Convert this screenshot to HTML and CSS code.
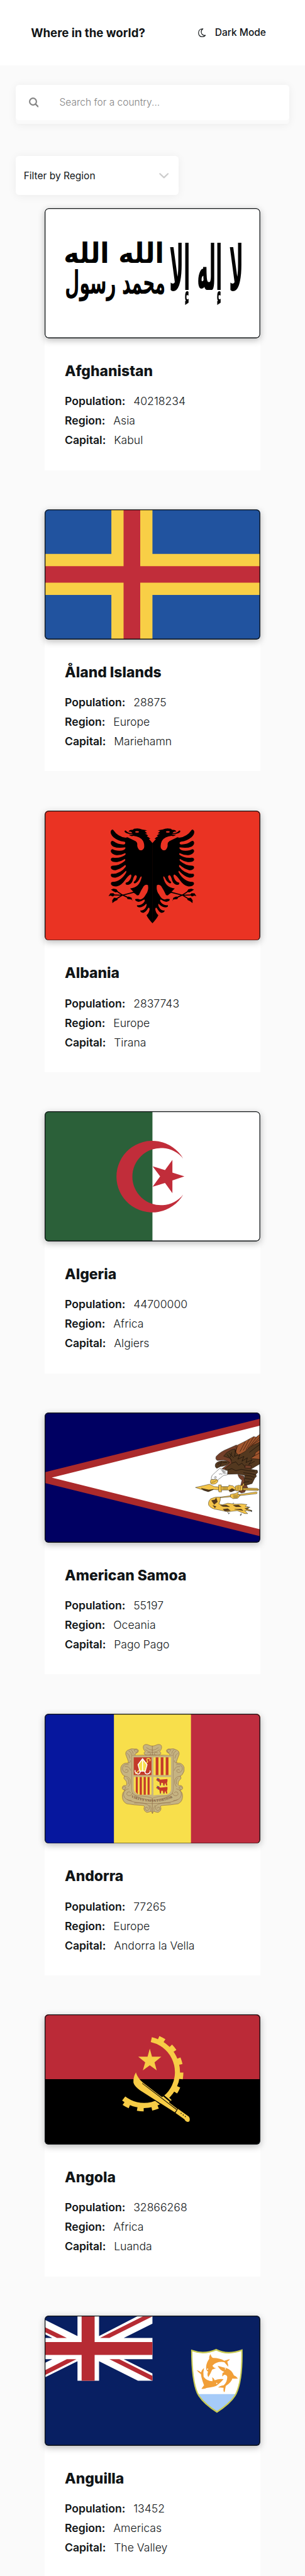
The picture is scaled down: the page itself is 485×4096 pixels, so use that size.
FILE: index.html
```html
<!DOCTYPE html>
<html lang="en">
<head>
<meta charset="utf-8">
<title>Where in the world?</title>
<link rel="stylesheet" href="styles.css">
</head>
<body>
<header class="header">
  <h1 class="brand">Where in the world?</h1>
  <button class="mode" type="button">
    <svg class="moon" viewBox="0 0 19 22"><path d="M12 1.2C3.500 1.600 1 6.500 1 11.200c0 5.600 3.800 9.800 9 9.800 3.400 0 6.200-1.300 8-3.700-6.500 1-10.300-2.800-10.300-8.300 0-3.200 1.500-6 4.300-7.800z" fill="none" stroke="#111517" stroke-width="1.800" stroke-linejoin="round"/></svg>
    <span>Dark Mode</span>
  </button>
</header>
<main class="main">
  <div class="search">
    <div class="search-field">
      <svg class="lens" viewBox="0 0 24 24" fill="none" stroke="#848484" stroke-linecap="round"><circle cx="10" cy="10" r="8.300" stroke-width="3.200"/><path d="M16.500 16.500l5.800 5.800" stroke-width="3.600"/></svg>
      <span class="placeholder">Search for a country...</span>
    </div>
  </div>
  <div class="filter">
    <span>Filter by Region</span>
    <svg class="chevron" viewBox="0 0 24 14"><path d="M2 2l10 9.500L22 2" fill="none" stroke="#ccc" stroke-width="3.400" stroke-linecap="round" stroke-linejoin="round"/></svg>
  </div>
  <div class="cards">

    <article class="card">
      <svg class="flag" viewBox="0 0 530 320" preserveAspectRatio="none">
        <rect width="530" height="320" fill="#fff"/>
        <g class="script" transform="translate(30 68) scale(.3333)">
          <text transform="translate(830 400) scale(1 2.300)" font-size="200" textLength="545" lengthAdjust="spacingAndGlyphs">لا إله إلا</text>
          <text transform="translate(50 200)" font-size="205" textLength="740" lengthAdjust="spacingAndGlyphs">الله الله</text>
          <text transform="translate(60 425) scale(1 1.150)" font-size="205" textLength="740" lengthAdjust="spacingAndGlyphs">محمد رسول</text>
        </g>
        <rect class="edge" x="1" y="1" width="528" height="318" rx="9"/>
      </svg>
      <div class="info">
        <h2 class="name">Afghanistan</h2>
        <p class="row"><b>Population:</b><span>40218234</span></p>
        <p class="row"><b>Region:</b><span>Asia</span></p>
        <p class="row"><b>Capital:</b><span>Kabul</span></p>
      </div>
    </article>

    <article class="card">
      <svg class="flag" viewBox="0 0 530 320" preserveAspectRatio="none">
        <rect width="530" height="320" fill="#21539f"/>
        <path d="M164 0h101v320H164zM0 109.400h530v101H0z" fill="#f8cf46"/>
        <path d="M194 0h41v320h-41zM0 139.500h530v40.500H0z" fill="#c12d3a"/>
        <rect class="edge" x="1" y="1" width="528" height="318" rx="9"/>
      </svg>
      <div class="info">
        <h2 class="name">Åland Islands</h2>
        <p class="row"><b>Population:</b><span>28875</span></p>
        <p class="row"><b>Region:</b><span>Europe</span></p>
        <p class="row"><b>Capital:</b><span>Mariehamn</span></p>
      </div>
    </article>

    <article class="card">
      <svg class="flag" viewBox="0 0 530 320" preserveAspectRatio="none">
        <rect width="530" height="320" fill="#ea3323"/>
        <defs>
          <g id="half-eagle">
            <path d="M785 228 760 205 770 204Q758 193 745 190L755 187Q745 178 733 176L748 174 732 162 748 157 715 153Q690 143 660 149L650 155Q628 152 622 165 640 162 648 172 625 177 603 158 592 158 597 167 610 178 655 179 640 184 624 181 635 192 655 188 700 192 720 215 732 235 727 255 715 272 697 266 682 258 681 240 684 225 670 217L615 195 603 198Q550 192 520 156 510 148 502 162 498 180 520 195 550 215 590 220 602 222 600 228 600 235 585 235 550 235 522 218 505 210 502 225 502 240 520 247 550 258 600 251 604 256 598 260 590 268 560 270 530 268 515 261 500 262 503 275 510 290 540 294 570 296 600 283 606 288 600 292 570 312 518 308 500 308 503 322 510 334 545 332 575 328 598 315 603 319 598 325 560 352 517 352 500 352 503 365 510 378 535 377 570 370 600 348 607 352 603 358 570 395 515 397 500 395 503 408 508 420 535 418 565 415 605 380 610 384 606 390 570 440 515 441 500 442 504 455 515 468 545 466 575 460 600 430 620 408 635 401 645 402 640 415 630 440 604 446 598 455 612 458 640 458 650 435 658 408 668 404 680 405 678 415 675 430 658 442 655 450 668 449 690 440 700 418 710 405 711 415 705 440 685 460 665 475 633 478L650 492 660 503Q672 508 680 516L692 514Q705 490 725 465 740 452 754 460 760 490 740 510 720 540 700 538 680 532 667 537 665 548 690 551 710 548 728 538 735 540 730 550 715 572 680 570 675 580 695 582 720 582 742 562 748 565 740 580 725 602 702 598 700 610 722 612 740 608 755 585 762 580 765 590 762 612 744 625 755 645 785 670z"/>
            <ellipse cx="680" cy="166" rx="13" ry="4.500" fill="#ea3323"/>
            <path d="M660 498 580 515 500 513M537 490 580 513 630 532M580 515 530 540" fill="none" stroke="#000" stroke-width="6"/>
            <path d="M503 484l18-5 20 3 10 12-15 5-16-6zM487 520l12-15 22-1 8 9-12 9-17-5zM513 558l-1-15 12-14 20 2 5 9-20 8zM649 548l-6-10-28-2-4-9 12-5 20 7z"/>
          </g>
        </defs>
        <g transform="scale(.3635 .4464) translate(-55 -49)">
          <use href="#half-eagle"/>
          <use href="#half-eagle" transform="translate(1568 0) scale(-1 1)"/>
        </g>
        <rect class="edge" x="1" y="1" width="528" height="318" rx="9"/>
      </svg>
      <div class="info">
        <h2 class="name">Albania</h2>
        <p class="row"><b>Population:</b><span>2837743</span></p>
        <p class="row"><b>Region:</b><span>Europe</span></p>
        <p class="row"><b>Capital:</b><span>Tirana</span></p>
      </div>
    </article>

    <article class="card">
      <svg class="flag" viewBox="0 0 530 320" preserveAspectRatio="none">
        <rect width="530" height="320" fill="#fff"/>
        <path d="M0 0h265v320H0z" fill="#2b6039"/>
        <path d="M340.600 116.500A88 88 0 1 0 340.600 204.900 70.300 70.300 0 1 1 340.600 116.500z" fill="#c12d3a"/>
        <path transform="scale(.3635 .4464) translate(-55 -49)" d="M1000 408 919 430V500L869 444 785 465 836 408 785 352 869 373 919 317V387z" fill="#c12d3a"/>
        <rect class="edge" x="1" y="1" width="528" height="318" rx="9"/>
      </svg>
      <div class="info">
        <h2 class="name">Algeria</h2>
        <p class="row"><b>Population:</b><span>44700000</span></p>
        <p class="row"><b>Region:</b><span>Africa</span></p>
        <p class="row"><b>Capital:</b><span>Algiers</span></p>
      </div>
    </article>

    <article class="card">
      <svg class="flag" viewBox="0 0 530 320" preserveAspectRatio="none">
        <rect width="530" height="320" fill="#000062"/>
        <g transform="scale(.3635 .4464) translate(-55 -49)">
          <path d="M55 378 1513 83V731L55 437z" fill="#ab2a2b"/>
          <path d="M103 408 1513 121V693z" fill="#fff"/>
        </g>
        <g transform="translate(360 28) scale(.3333)" stroke="#000" stroke-width="2" stroke-linejoin="round">
          <path d="M515 70 480 98 462 93 400 127 335 160 310 200 340 240 420 240 515 190z" fill="#a0552d"/>
          <path d="M335 155 270 184Q215 205 185 240 176 262 195 270L240 266Q285 275 275 295L228 330 250 345 290 330 330 220z" fill="#74402a"/>
          <path d="M515 130 440 165 395 205 350 230 325 205 322 185 300 190 262 212 240 238 290 255 300 290 250 330 262 345 248 372 345 370 395 380 385 440 400 455 450 440 470 400 482 388 478 372 492 358 488 342 440 335 515 290z" fill="#53381f"/>
          <path d="M515 184 475 212 470 230 440 255 515 262z" fill="#a0552d"/>
          <path d="M240 272Q195 272 180 295 172 318 190 328L215 315Q260 312 285 285 270 270 240 272z" fill="#53381f"/>
          <path d="M345 372Q350 400 375 415L362 470 352 500 372 510 395 504 402 490 418 470 408 452 385 445 395 425 388 385z" fill="#74402a"/>
          <path d="M400 305 445 310 440 328 395 325z" fill="#74402a"/>
          <path d="M345 160 325 205M400 130 360 205M430 112 385 195M462 95 405 190M490 90 420 180M515 90 440 165M515 110 450 155M330 190 320 240 360 225 345 260 390 240 375 275 415 250 405 285 450 265 425 300 470 275M300 210 290 245M280 215 315 250M265 225 300 270M300 290 330 280 350 305 375 290 400 318M515 145 430 210M505 215 450 245M270 340 300 330 330 345 370 335 420 345 470 350M385 360 430 365 475 375M400 380 440 385 465 395M395 400 450 410M395 430 430 425M195 300 225 280 215 310M230 285 265 285" fill="none" stroke-width="2.500"/>
          <path d="M212 328 185 352 155 380 148 402 158 410 195 415 240 380 268 375 270 345 240 335z" fill="#fff"/>
          <path d="M212 328 232 345 222 330 248 345 270 345 245 355 268 365 240 368z" fill="#aaa" stroke="none"/>
          <path d="M205 368l8 4 5-6 6 6 8-4M168 395l15-8 2 12-15 3" fill="none"/>
          <path d="M147 410Q138 428 145 440 160 450 180 442 198 432 198 418L185 408 165 412z" fill="#f5c54b"/>
          <path d="M150 432l25-6 15-14" fill="none"/>
          <path d="M32 469 135 445 170 462 205 465 205 487 165 484 130 500 95 490z" fill="#f5c54b"/>
          <path d="M75 475 130 487 165 483 125 500 95 490z" fill="#53381f"/>
          <path d="M203 450h20v12h55v-10l30 5 15 14 165 4 12 8-5 9-165-4-25 9-20 5-8-14h-52v14h-20q-6-12-2-26z" fill="#f5c54b"/>
          <path d="M222 460v30M236 463v23M246 463v23M256 463v23M266 463v23M280 490l22-14 22 12-30 14z" fill="#53381f"/>
          <path d="M380 480 497 485 M380 474 385 488" fill="none"/>
          <path d="M325 460 350 452 378 455 388 432 392 450 380 462 378 492 330 495z" fill="#f5c54b"/>
          <path d="M340 460v30M352 458v30M364 458v30" fill="none"/>
          <path d="M215 540 290 530 482 502q10 5 2 13L355 530 290 538 215 545z" fill="#f5c54b"/>
          <path d="M290 520 330 512 350 500 345 520 362 528 345 548 310 552 290 540z" fill="#f5c54b"/>
          <path d="M310 525h35M310 535h40M312 544h30" fill="none"/>
          <path d="M215 540Q180 535 145 552 122 575 130 600 145 625 190 632L270 648 340 640 395 662 418 662 395 640 450 640 410 625 430 615 400 610 412 595 370 590 330 592 270 585 230 597 205 590Q220 565 215 540z" fill="#f5c54b"/>
          <path d="M150 565 175 560 185 545 195 575 170 595zM160 600 185 610 175 620zM215 600 260 598 285 612 235 610zM235 630 270 625 290 640 250 645zM310 600 350 598 370 612 330 612zM320 630 370 628 385 640zM395 622l30 2-12 10z" fill="#53381f" stroke-width="1"/>
          <path d="M270 650l8 14M285 655l-8 10M370 660l-5 18M360 672l12-2M420 640l30 5M440 636l6 14M310 590l2-8M410 612l25 4" fill="none" stroke-width="3"/>
        </g>
        <rect class="edge" x="1" y="1" width="528" height="318" rx="9"/>
      </svg>
      <div class="info">
        <h2 class="name">American Samoa</h2>
        <p class="row"><b>Population:</b><span>55197</span></p>
        <p class="row"><b>Region:</b><span>Oceania</span></p>
        <p class="row"><b>Capital:</b><span>Pago Pago</span></p>
      </div>
    </article>

    <article class="card">
      <svg class="flag" viewBox="0 0 530 320" preserveAspectRatio="none">
        <rect width="530" height="320" fill="#f8df4b"/>
        <path d="M0 0h170.300v320H0z" fill="#06179e"/>
        <path d="M359.700 0H530v320H359.700z" fill="#bf2d3f"/>
        <defs>
          <path id="motto" d="M218 502Q375 570 532 502"/>
          <g id="half-frame">
            <path d="M376 192H355Q320 200 312 175L322 165Q300 140 310 120 325 105 350 118 362 124 376 124V192zM310 192 250 195Q240 185 255 178 275 170 272 155 262 142 245 146 215 140 200 152 175 160 178 185 185 205 195 230 200 245 195 250 155 245 142 280 135 310 155 335 165 345 172 345 155 360 175 375 188 385 185 410 180 420 170 415 152 415 152 438 160 452 175 450 150 465 153 500 155 535 185 550 240 560 300 562 325 565 312 580 310 605 335 614 358 610 366 605L376 622V192z" fill="#c5b382" stroke="#8a6746" stroke-width="3" stroke-linejoin="round"/>
            <path d="M250 165q-12-4-8-14 14-8 22 6 2 16-14 18M200 160q20 10 20 30M215 150q15 12 18 30M186 175q20 12 24 40M190 250q30-5 22-20M200 262q-35-10-45 20-5 30 25 38 20-2 15-18-15-12-20 2M170 275q35-5 45 30M165 350q25-10 45 20 8 35-15 55M185 360q22 10 12 45M156 430q10-14 22-2 0 18-16 16M200 440q-40 5-38 45 8 40 60 42M215 470q-10-15-25-5-12 20 10 26 24 0 26-20 30 40 150 55M190 520q60 30 185 28M240 545q80-8 110 20 10 30-15 35-20-5-12-22 18-8 18 8M355 560q15 20 8 45M330 135q25 20 46 20M322 150q20 20 54 22M335 175q15-8 25 0 6 14-8 15" fill="none" stroke="#8a6746" stroke-width="2.500"/>
          </g>
        </defs>
        <g transform="translate(140 38) scale(.3333)">
          <use href="#half-frame"/>
          <use href="#half-frame" transform="translate(750 0) scale(-1 1)"/>
          <path d="M222 192H528V440Q530 490 480 492 400 495 375 510 350 495 270 492 220 490 222 440z" fill="#c5b382" stroke="#8a6746" stroke-width="2"/>
          <path d="M237 207h131v131H237z" fill="#c43a2a"/>
          <path d="M382 207h130v131H382zM237 352h131v130Q340 485 290 482 240 482 237 440zM382 352h130v88q-2 40-40 43-60 0-90 5z" fill="#f8df4b"/>
          <path d="M399 207h20v131h-20zM436 207h20v131h-20zM473 207h20v131h-20zM252 352h15v128l-15-16zM281 352h16v131h-16zM310 352h16v132h-16zM339 352h15v132h-15z" fill="#c43a2a"/>
          <path d="M248 330 340 240Q325 215 345 215 365 220 355 235" fill="none" stroke="#f8df4b" stroke-width="7"/>
          <path d="M302 218 335 262 322 310H282L269 262z" fill="#f8df4b" stroke="#fff" stroke-width="7"/>
          <path d="M302 218v92M285 312q-5 25-25 15-18-10-12-25M318 312q5 25 30 15 15-10 8-22" fill="none" stroke="#fff" stroke-width="7"/>
          <g id="cow" fill="#c43a2a"><path d="M402 375 410 362 425 365 432 372 485 367Q488 385 482 395L485 415H476L470 395 462 415H455L452 396 440 395 438 414H430L426 390 415 382z"/><path d="M410 358l4 10 10-6M420 375l-4 12M430 414h7M458 415h6" stroke="#2f57a5" stroke-width="4" fill="none"/></g>
          <use href="#cow" y="59"/>
          <text class="motto" font-size="25"><textPath href="#motto" textLength="315" lengthAdjust="spacing">VIRTVS VNITA FORTIOR</textPath></text>
        </g>
        <rect class="edge" x="1" y="1" width="528" height="318" rx="9"/>
      </svg>
      <div class="info">
        <h2 class="name">Andorra</h2>
        <p class="row"><b>Population:</b><span>77265</span></p>
        <p class="row"><b>Region:</b><span>Europe</span></p>
        <p class="row"><b>Capital:</b><span>Andorra la Vella</span></p>
      </div>
    </article>

    <article class="card">
      <svg class="flag" viewBox="0 0 530 320" preserveAspectRatio="none">
        <rect width="530" height="320" fill="#000"/>
        <path d="M0 0h530v159.300H0z" fill="#bb2a37"/>
        <path d="M262.200 62A82 82 0 1 1 194.300 206.900" fill="none" stroke="#f7cc46" stroke-width="12.500"/>
        <path d="M280 57.800A91.500 91.500 0 1 1 193.800 218.300" fill="none" stroke="#f7cc46" stroke-width="10" stroke-dasharray="16 19.930"/>
        <g transform="scale(.3635 .4464) translate(-55 -52)">
          <path d="M766 241 781 285H844L798 316 813 360 766 333 719 360 735 316 688 285H751z" fill="#f7cc46"/>
          <path d="M775 508 940 604M850 494 950 562" stroke="#000" stroke-width="8"/>
          <path d="M672 372Q652 400 656 430 664 450 700 470L935 592 953 573 720 428Q685 405 672 372zM957 573 1030 615Q1041 628 1033 642 1012 650 1000 630L940 595z" fill="#f7cc46"/>
          <path d="M715 432 948 577" stroke="#000" stroke-width="3.500"/>
          <path d="M978 597h.1M992 606h.1M1006 615h.1" stroke="#000" stroke-width="6" stroke-linecap="round"/>
        </g>
        <rect class="edge" x="1" y="1" width="528" height="318" rx="9"/>
      </svg>
      <div class="info">
        <h2 class="name">Angola</h2>
        <p class="row"><b>Population:</b><span>32866268</span></p>
        <p class="row"><b>Region:</b><span>Africa</span></p>
        <p class="row"><b>Capital:</b><span>Luanda</span></p>
      </div>
    </article>

    <article class="card">
      <svg class="flag" viewBox="0 0 530 320" preserveAspectRatio="none">
        <rect width="530" height="320" fill="#081f62"/>
        <g transform="scale(.3635 .4222) translate(-55 -54)">
          <path d="M58 79 277 173V184H107L58 163zM423 173 686 56H784V101L590 184H423zM58 329 107 308H277V320L58 413zM423 320V308H590L784 391V433H686zM277 54H423V433H277zM55 184H784V308H55z" fill="#fff"/>
          <path d="M58 122 205 184H139L58 150zM719 59H784L493 184H429zM58 372 205 308H270L58 400zM493 308H560L784 405V433zM305 54H393V433H305zM55 208H784V283H55z" fill="#b62b33"/>
          <clipPath id="shield"><path d="M1050 257Q1130 283 1215 252 1290 286 1389 255 1393 430 1350 508 1320 560 1220 615 1120 560 1088 505 1050 430 1050 257z"/></clipPath>
          <path d="M1050 257Q1130 283 1215 252 1290 286 1389 255 1393 430 1350 508 1320 560 1220 615 1120 560 1088 505 1050 430 1050 257z" fill="#fff"/>
          <path d="M1040 511H1400V630H1040z" fill="#a6cbf8" clip-path="url(#shield)"/>
          <path d="M1050 257Q1130 283 1215 252 1290 286 1389 255 1393 430 1350 508 1320 560 1220 615 1120 560 1088 505 1050 430 1050 257z" fill="none" stroke="#c9cb52" stroke-width="9"/>
          <path d="M1177 278Q1183 298 1195 300 1240 300 1270 317L1305 308Q1310 312 1290 322 1298 340 1296 352L1270 325Q1220 318 1190 345 1195 358 1215 360L1188 368Q1175 395 1162 412 1152 400 1160 380 1145 375 1147 352 1150 325 1168 306 1165 290 1177 278zM1225 346Q1260 355 1285 360 1320 370 1335 402 1350 405 1362 420 1340 422 1325 420 1315 445 1280 463 1275 485 1272 499 1262 500 1265 474 1245 472 1228 473 1240 462 1266 460 1290 440 1290 410 1285 398 1270 398L1255 408 1258 388 1270 382Q1240 372 1225 346zM1265 424Q1245 445 1225 457 1210 470 1150 475 1140 482 1115 480L1133 460Q1115 420 1112 395 1095 385 1083 372 1100 375 1113 385 1120 365 1133 360 1125 385 1130 410 1150 435 1190 436 1192 425 1187 413 1200 418 1205 430 1235 420 1265 424z" fill="#f19f38"/>
          <path d="M1157 366h.1M1277 364h.1M1219 449h.1" stroke="#fff" stroke-width="8" stroke-linecap="round"/>
        </g>
        <rect class="edge" x="1" y="1" width="528" height="318" rx="9"/>
      </svg>
      <div class="info">
        <h2 class="name">Anguilla</h2>
        <p class="row"><b>Population:</b><span>13452</span></p>
        <p class="row"><b>Region:</b><span>Americas</span></p>
        <p class="row"><b>Capital:</b><span>The Valley</span></p>
      </div>
    </article>
  </div>
</main>
</body>
</html>
```
FILE: styles.css
```css
* { box-sizing: border-box; margin: 0; padding: 0; }

body {
  height: 4096px;
  overflow: hidden;
  background: #fafafa;
  color: #111517;
  font-family: "Inter", sans-serif;
}

.header {
  display: flex;
  align-items: center;
  justify-content: space-between;
  height: 103.5px;
  padding: 0 62px 0 49.2px;
  background: #fff;
}

.brand { font-size: 18.62px; font-weight: 700; }

.mode {
  display: flex;
  align-items: center;
  gap: 14.5px;
  border: 0;
  background: none;
  color: inherit;
  font: 500 15.52px "Inter", sans-serif;
}

.moon { width: 12.300px; height: 14.200px; }

.main { padding: 31px 25.400px 0; }

.search {
  height: 62.100px;
  border-radius: 5.200px;
  background: #fafafa;
  box-shadow: 0 1.300px 14px rgba(0, 0, 0, .06);
}

.search-field {
  display: flex;
  align-items: center;
  gap: 33.200px;
  height: 56.900px;
  padding-left: 20.400px;
  border-radius: 5.200px;
  background: #fff;
}

.lens { width: 15.600px; height: 15.600px; }

.placeholder {
  color: #858585;
  font-size: 15.520px;
  font-weight: 300;
}

.filter {
  display: flex;
  align-items: center;
  justify-content: space-between;
  width: 258.600px;
  height: 62.100px;
  margin-top: 51.800px;
  padding: 0 15.600px 0 12.300px;
  border-radius: 5.200px;
  background: #fff;
  box-shadow: 0 1.300px 14px rgba(0, 0, 0, .06);
  font-size: 15.520px;
}

.chevron { width: 15.500px; height: 9px; }

.cards {
  display: grid;
  gap: 62.100px;
  margin-top: 20.700px;
  padding: 0 45.700px;
}

.card { height: 416.580px; background: #fff; }

.flag {
  display: block;
  width: 100%;
  height: 206.900px;
  border-radius: 6px;
  box-shadow: 0 3px 11px rgba(0, 0, 0, .28);
}

.edge { fill: none; stroke: #111517; stroke-width: 2; }

.script {
  font-family: "DejaVu Sans", sans-serif;
  font-weight: 700;
}

.motto {
  fill: #7a553c;
  font-family: "Liberation Serif", serif;
  font-weight: 700;
}

.info { padding: 37.900px 32px 0; }

.name {
  margin-bottom: 18.400px;
  font-size: 22.900px;
  font-weight: 800;
  line-height: 28px;
}

.row {
  display: flex;
  gap: 12.900px;
  font-size: 17.590px;
  font-weight: 300;
  line-height: 31.050px;
}

.row b { font-weight: 600; }
```
